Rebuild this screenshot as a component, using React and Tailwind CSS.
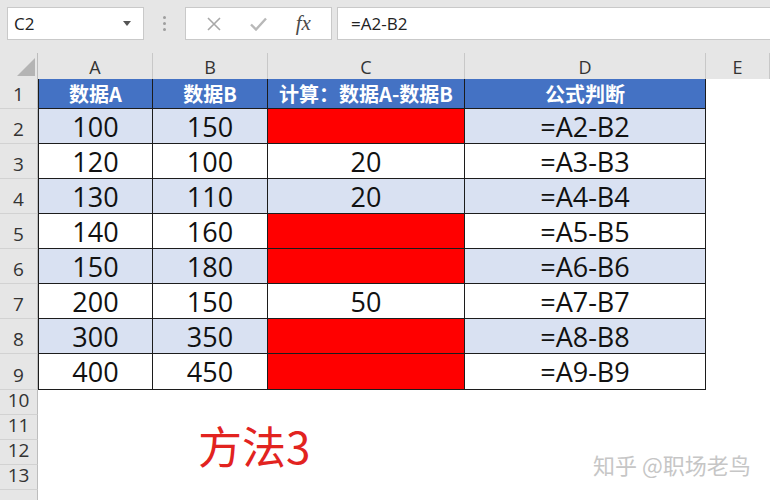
const cols = "grid grid-cols-[38px_115px_115px_197px_241px_1fr]";

const rows = [
  { n: 2, a: 100, b: 150, c: null, d: "=A2-B2", h: "h-[35px]" },
  { n: 3, a: 120, b: 100, c: 20, d: "=A3-B3", h: "h-[35px]" },
  { n: 4, a: 130, b: 110, c: 20, d: "=A4-B4", h: "h-[35px]" },
  { n: 5, a: 140, b: 160, c: null, d: "=A5-B5", h: "h-[35px]" },
  { n: 6, a: 150, b: 180, c: null, d: "=A6-B6", h: "h-[35px]" },
  { n: 7, a: 200, b: 150, c: 50, d: "=A7-B7", h: "h-[35px]" },
  { n: 8, a: 300, b: 350, c: null, d: "=A8-B8", h: "h-[35px]" },
  { n: 9, a: 400, b: 450, c: null, d: "=A9-B9", h: "h-[36px]" },
];

const latin = { fontFamily: '"Open Sans", "Noto Sans CJK SC", sans-serif' };
const cjk = { fontFamily: '"Noto Sans CJK SC", "Open Sans", sans-serif' };

function RowHead({ children }) {
  return (
    <div className="flex items-end justify-center bg-[#e6e6e6] border-r border-b border-r-[#bdbdbd] border-b-[#d2d2d2] text-[19px] leading-none text-[#333] pb-[4px]">
      {children}
    </div>
  );
}

function Cell({ children, fill, first }) {
  return (
    <div
      className={`flex items-center justify-center border-r border-b border-[#1c1c1c] text-[27px] leading-none text-[#111] ${first ? "border-l" : ""} ${fill}`}
    >
      {children}
    </div>
  );
}

function Toolbar() {
  return (
    <div className="h-[53px] bg-[#e6e6e6] flex items-start pt-[7px] pl-[7px]">
      {/* name box */}
      <div className="w-[137px] h-[33px] bg-white border border-[#c9c9c9] flex items-center justify-between px-[6px]">
        <span className="text-[17px] text-[#222]" style={latin}>C2</span>
        <svg width="8" height="5" viewBox="0 0 8 5" className="mr-[6px]">
          <path d="M0 0 L8 0 L4 5 Z" fill="#555" />
        </svg>
      </div>
      {/* grip dots */}
      <div className="w-[41px] h-[33px] flex flex-col items-center justify-center gap-[3px]">
        <span className="w-[3px] h-[3px] rounded-full bg-[#9e9e9e]" />
        <span className="w-[3px] h-[3px] rounded-full bg-[#9e9e9e]" />
        <span className="w-[3px] h-[3px] rounded-full bg-[#9e9e9e]" />
      </div>
      {/* cancel / enter / insert function */}
      <div className="w-[147px] h-[33px] bg-white border border-[#c9c9c9] flex items-center justify-around px-[6px]">
        <svg width="16" height="16" viewBox="0 0 16 16">
          <path d="M2 2 L14 14 M14 2 L2 14" stroke="#a8a8a8" strokeWidth="1.6" fill="none" />
        </svg>
        <svg width="17" height="14" viewBox="0 0 17 14">
          <path d="M1 7.5 L6 12.5 L16 1.5" stroke="#b8b8b8" strokeWidth="2.4" fill="none" />
        </svg>
        <span className="text-[21px] italic text-[#4a4a4a]" style={{ fontFamily: '"Liberation Serif", serif' }}>
          fx
        </span>
      </div>
      {/* formula input */}
      <div className="ml-[5px] flex-1 h-[33px] bg-white border border-r-0 border-[#c9c9c9] flex items-center pl-[13px]">
        <span className="text-[17px] text-[#222]" style={latin}>=A2-B2</span>
      </div>
    </div>
  );
}

export default function App() {
  return (
    <div className="w-[770px] h-[500px] bg-white overflow-hidden relative" style={latin}>
      <Toolbar />

      {/* column headers */}
      <div className={`${cols} h-[26px] bg-[#e6e6e6] text-[18px] text-[#333]`}>
        <div className="relative border-r border-[#bdbdbd]">
          <svg width="18" height="18" viewBox="0 0 18 18" className="absolute left-[17px] top-[5px]">
            <path d="M18 0 L18 18 L0 18 Z" fill="#b4b4b4" />
          </svg>
        </div>
        {["A", "B", "C", "D", "E"].map((l) => (
          <div key={l} className="flex items-end justify-center border-r border-[#c8c8c8] leading-none pb-[3px]">
            {l}
          </div>
        ))}
      </div>

      {/* header row */}
      <div className={`${cols} h-[30px]`}>
        <RowHead>1</RowHead>
        {["数据A", "数据B", "计算：数据A-数据B", "公式判断"].map((t, i) => (
          <div
            key={t}
            className={`flex items-center justify-center bg-[#4472c4] border-r border-b border-[#1c1c1c] text-white font-bold text-[20px] leading-none ${i === 0 ? "border-l" : ""}`}
            style={cjk}
          >
            {t}
          </div>
        ))}
        <div />
      </div>

      {/* data rows */}
      {rows.map((r) => {
        const band = r.n % 2 === 0 ? "bg-[#d9e1f2]" : "bg-white";
        return (
          <div key={r.n} className={`${cols} ${r.h}`}>
            <RowHead>{r.n}</RowHead>
            <Cell fill={band} first>{r.a}</Cell>
            <Cell fill={band}>{r.b}</Cell>
            <Cell fill={r.c === null ? "bg-[#ff0000]" : band}>{r.c}</Cell>
            <Cell fill={band}>{r.d}</Cell>
            <div />
          </div>
        );
      })}

      {/* empty rows */}
      {[10, 11, 12, 13].map((n) => (
        <div key={n} className={`${cols} h-[25px]`}>
          <RowHead>{n}</RowHead>
        </div>
      ))}
      <div className={`${cols} h-[25px]`}>
        <div className="bg-[#e6e6e6] border-r border-[#bdbdbd]" />
      </div>

      <div
        className="absolute left-[198px] top-[423px] text-[44px] leading-none text-[#e2231f]"
        style={cjk}
      >
        方法3
      </div>
      <div
        className="absolute left-[593px] top-[453px] text-[22px] leading-none text-[#c6c6c6]"
        style={cjk}
      >
        知乎 @职场老鸟
      </div>
    </div>
  );
}
